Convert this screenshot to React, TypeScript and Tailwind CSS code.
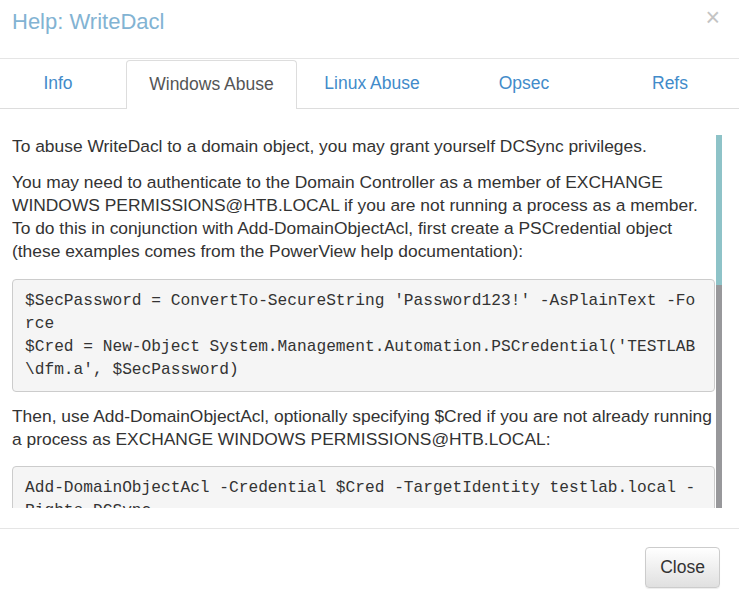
import React from 'react'

const tabs = [
 { label: 'Info', w: 'w-[126px] pr-[10px]' },
 { label: 'Windows Abuse', w: 'w-[171px]', active: true },
 { label: 'Linux Abuse', w: 'w-[150px]' },
 { label: 'Opsec', w: 'w-[154px]' },
 { label: 'Refs', w: 'w-[138px]' },
]

const Code: React.FC<{ children: React.ReactNode; className?: string }> = ({ children, className }) => (
 <pre
  className={`bg-[#f5f5f5] border border-[#ccc] rounded-[4px] px-[12px] py-[9.5px] font-['Liberation_Mono',monospace] text-[16.2px] leading-[23px] text-[#333] whitespace-pre-wrap break-all ${className ?? ''}`}
 >
  {children}
 </pre>
)

export default function App() {
 return (
  <div className="w-[739px] h-[602px] bg-white flex flex-col font-['Liberation_Sans',Arial,sans-serif] text-[17.5px] leading-[23px] text-[#333]">
   <div className="h-[59px] shrink-0 border-b border-[#e5e5e5] flex items-start justify-between pl-[12px] pr-[19px]">
    <h4 className="mt-[7px] text-[22px] leading-[30px] text-[#82b3d3]">Help: WriteDacl</h4>
    <button className="mt-[2px] text-[25px] leading-[30px] font-normal text-[#c4c4c4]">&times;</button>
   </div>

   <div className="h-[50px] shrink-0 flex">
    {tabs.map(t =>
     t.active ? (
      <div
       key={t.label}
       className={`${t.w} mt-[1px] h-[49px] pb-[2px] border border-b-0 border-[#ddd] rounded-t-[4px] flex items-center justify-center text-[#555]`}
      >
       {t.label}
      </div>
     ) : (
      <div
       key={t.label}
       className={`${t.w} h-full border-b border-[#ddd] flex items-center justify-center text-[#428bca]`}
      >
       {t.label}
      </div>
     )
    )}
   </div>

   <div className="flex pt-[26px] pb-[20px] pl-[12px]">
    <div className="w-[703px] h-[373px] overflow-hidden text-[17.4px]">
     <p className="mb-[13px]">
      To abuse WriteDacl to a domain object, you may grant yourself DCSync privileges.
     </p>
     <p className="mb-[16px]">
      You may need to authenticate to the Domain Controller as a member of EXCHANGE WINDOWS
      PERMISSIONS@HTB.LOCAL if you are not running a process as a member. To do this in
      conjunction with Add-DomainObjectAcl, first create a PSCredential object (these examples
      comes from the PowerView help documentation):
     </p>
     <Code className="mb-[13px]">
      {"$SecPassword = ConvertTo-SecureString 'Password123!' -AsPlainText -Force\n$Cred = New-Object System.Management.Automation.PSCredential('TESTLAB\\dfm.a', $SecPassword)"}
     </Code>
     <p className="mb-[15px]">
      Then, use Add-DomainObjectAcl, optionally specifying $Cred if you are not already running a
      process as EXCHANGE WINDOWS PERMISSIONS@HTB.LOCAL:
     </p>
     <Code>{'Add-DomainObjectAcl -Credential $Cred -TargetIdentity testlab.local -Rights DCSync'}</Code>
    </div>
    <div className="w-[6px] h-[373px] ml-[1px] flex flex-col">
     <div className="h-[150px] bg-[#8ec3c8]" />
     <div className="flex-1 bg-[#98989b]" />
    </div>
   </div>

   <div className="flex-1 border-t border-[#e5e5e5] flex justify-end items-start pt-[18px] pr-[19px]">
    <button className="h-[41px] w-[75px] rounded-[4px] border border-[#ccc] bg-gradient-to-b from-white to-[#e0e0e0] text-[17.5px] text-[#333] shadow-[inset_0_1px_0_rgba(255,255,255,0.15),0_1px_1px_rgba(0,0,0,0.075)]">
     Close
    </button>
   </div>
  </div>
 )
}
